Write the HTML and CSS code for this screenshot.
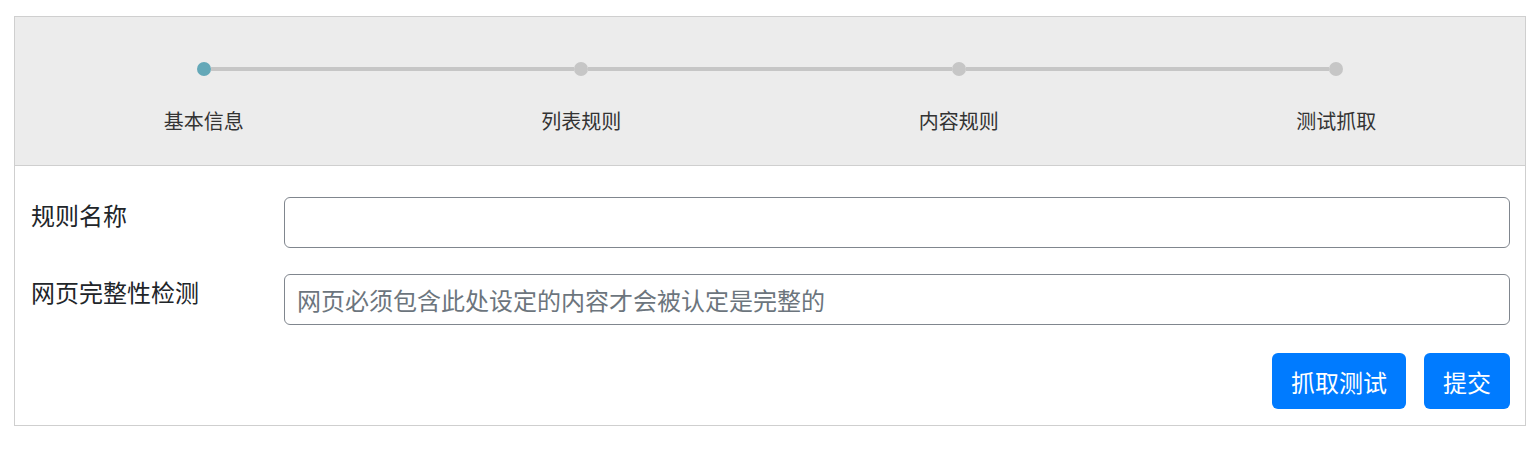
FILE: index.html
```html
<!DOCTYPE html>
<html lang="zh-CN">
<head>
    <meta charset="UTF-8">
    <title>规则编辑</title>
    <link rel="stylesheet" href="styles.css">
</head>
<body>

    <div class="panel">
        <div class="steps">
            <div class="track">
                <span class="dot active"></span>
                <span class="line"></span>
                <span class="dot"></span>
                <span class="line"></span>
                <span class="dot"></span>
                <span class="line"></span>
                <span class="dot"></span>
            </div>
            <div class="labels">
                <div>基本信息</div>
                <div>列表规则</div>
                <div>内容规则</div>
                <div>测试抓取</div>
            </div>
        </div>

        <form class="rule-form">
            <div class="row">
                <label for="ruleName">规则名称</label>
                <input type="text" id="ruleName">
            </div>
            <div class="row">
                <label for="checkText">网页完整性检测</label>
                <input type="text" id="checkText" placeholder="网页必须包含此处设定的内容才会被认定是完整的">
            </div>
            <div class="actions">
                <button type="button">抓取测试</button>
                <button type="button">提交</button>
            </div>
        </form>
    </div>

</body>
</html>
```

FILE: styles.css
```css
body {
    margin: 0;
    font-family: "Noto Sans CJK SC", "Noto Sans", sans-serif;
    background-color: #fff;
    color: #212529;
}

.panel {
    margin: 16px 10px 0 14px;
    border: 1px solid #cfcfcf;
}

.steps {
    background-color: #ececec;
    border-bottom: 1px solid #cfcfcf;
    padding: 45px 0 30px;
}

.track {
    display: flex;
    align-items: center;
    padding: 0 calc(12.5% - 7px);
}

.dot {
    width: 14px;
    height: 14px;
    border-radius: 50%;
    background-color: #c6c6c6;
    flex: none;
}

.dot.active {
    background-color: #64a8b8;
}

.line {
    flex: 1;
    height: 4px;
    background-color: #c6c6c6;
}

.labels {
    display: grid;
    grid-template-columns: repeat(4, 1fr);
    margin-top: 31px;
    text-align: center;
    font-size: 20px;
    line-height: 28px;
    color: #333;
}

.rule-form {
    padding: 31px 15px 16px 16px;
}

.row {
    display: grid;
    grid-template-columns: 253px 1fr;
    margin-bottom: 26px;
}

.row label {
    font-size: 24px;
    line-height: 36px;
}

.row input {
    height: 51px;
    box-sizing: border-box;
    border: 1px solid #80868e;
    border-radius: 6px;
    padding: 0 12px;
    font-family: inherit;
    font-size: 24px;
    color: #495057;
}

.row input::placeholder {
    color: #6c757d;
}

.actions {
    display: flex;
    justify-content: flex-end;
    gap: 18px;
    margin-top: 28px;
}

.actions button {
    height: 56px;
    padding: 0 19px;
    border: none;
    border-radius: 6px;
    background-color: #007bff;
    color: #fff;
    font-family: inherit;
    font-size: 24px;
    cursor: pointer;
}
```
